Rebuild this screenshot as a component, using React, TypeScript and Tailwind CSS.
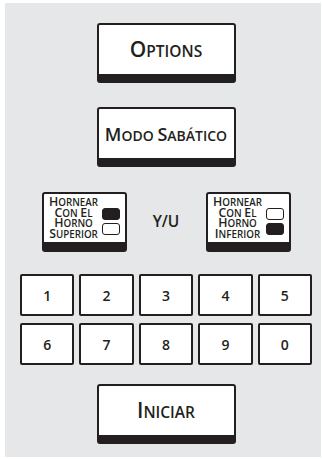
import React from "react";

const font = { fontFamily: '"Open Sans", "Liberation Sans", sans-serif' };

function SC({ text, big, small }: { text: string; big: string; small: string }) {
  const words = text.split(" ");
  return (
    <span className="whitespace-nowrap">
      {words.map((w, i) => (
        <React.Fragment key={i}>
          {i > 0 && <span className={small}> </span>}
          <span className={big}>{w[0]}</span>
          <span className={small}>{w.slice(1).toUpperCase()}</span>
        </React.Fragment>
      ))}
    </span>
  );
}

function BigButton({ label, big, small }: { label: string; big: string; small: string }) {
  return (
    <div className="w-[139px] h-[60px] bg-white border-2 border-b-[9px] border-[#231f20] rounded-[3px] flex items-center justify-center text-[#231f20] font-semibold leading-none">
      <SC text={label} big={big} small={small} />
    </div>
  );
}

function Indicator({ on }: { on: boolean }) {
  return (
    <div
      className={
        "w-[18px] h-[12px] rounded-[3px] border-[1.5px] border-[#231f20] " +
        (on ? "bg-[#231f20]" : "bg-white")
      }
    />
  );
}

function OvenBox({ lines, top }: { lines: string[]; top: boolean }) {
  return (
    <div className="w-[85px] h-[60px] bg-white border-2 border-b-[10px] border-[#231f20] rounded-[3px] flex items-start pl-[2px] pr-[5px]">
      <div className="w-[57px] flex flex-col items-center text-[#231f20] font-semibold pt-[4px]">
        {lines.map((l, i) => (
          <div key={i} className="h-[10.6px] leading-[10.6px] flex items-end justify-center">
            <SC text={l} big="text-[12.3px]" small="text-[9.8px]" />
          </div>
        ))}
      </div>
      <div className="ml-auto flex flex-col gap-[3.5px] mt-[13.5px]">
        <Indicator on={top} />
        <Indicator on={!top} />
      </div>
    </div>
  );
}

function Key({ n }: { n: string }) {
  return (
    <div className="h-[42px] bg-white border-2 border-[#231f20] rounded-[2px] flex items-center justify-center text-[14px] font-semibold text-[#231f20]">
      {n}
    </div>
  );
}

export default function App() {
  return (
    <div className="w-[322px] h-[459px] bg-white pl-[5px] pt-[3px]" style={font}>
      <div className="w-[316px] h-[454px] bg-[#e6e7e8] flex flex-col items-center pl-[6px] pt-[20px]">
        <BigButton label="Options" big="text-[21px]" small="text-[15.5px]" />
        <div className="h-[24px]" />
        <BigButton label="Modo Sabático" big="text-[18px]" small="text-[14px]" />
        <div className="h-[25px]" />
        <div className="w-[249px] flex items-center">
          <OvenBox lines={["Hornear", "Con El", "Horno", "Superior"]} top={true} />
          <div className="flex-1 flex justify-center text-[15.5px] font-semibold text-[#231f20]">
            Y/U
          </div>
          <OvenBox lines={["Hornear", "Con El", "Horno", "Inferior"]} top={false} />
        </div>
        <div className="h-[22px]" />
        <div className="w-[292px] grid grid-cols-5 gap-x-[5px] gap-y-[7px]">
          {["1", "2", "3", "4", "5", "6", "7", "8", "9", "0"].map((n) => (
            <Key key={n} n={n} />
          ))}
        </div>
        <div className="h-[19px]" />
        <BigButton label="Iniciar" big="text-[21px]" small="text-[15.5px]" />
      </div>
    </div>
  );
}
